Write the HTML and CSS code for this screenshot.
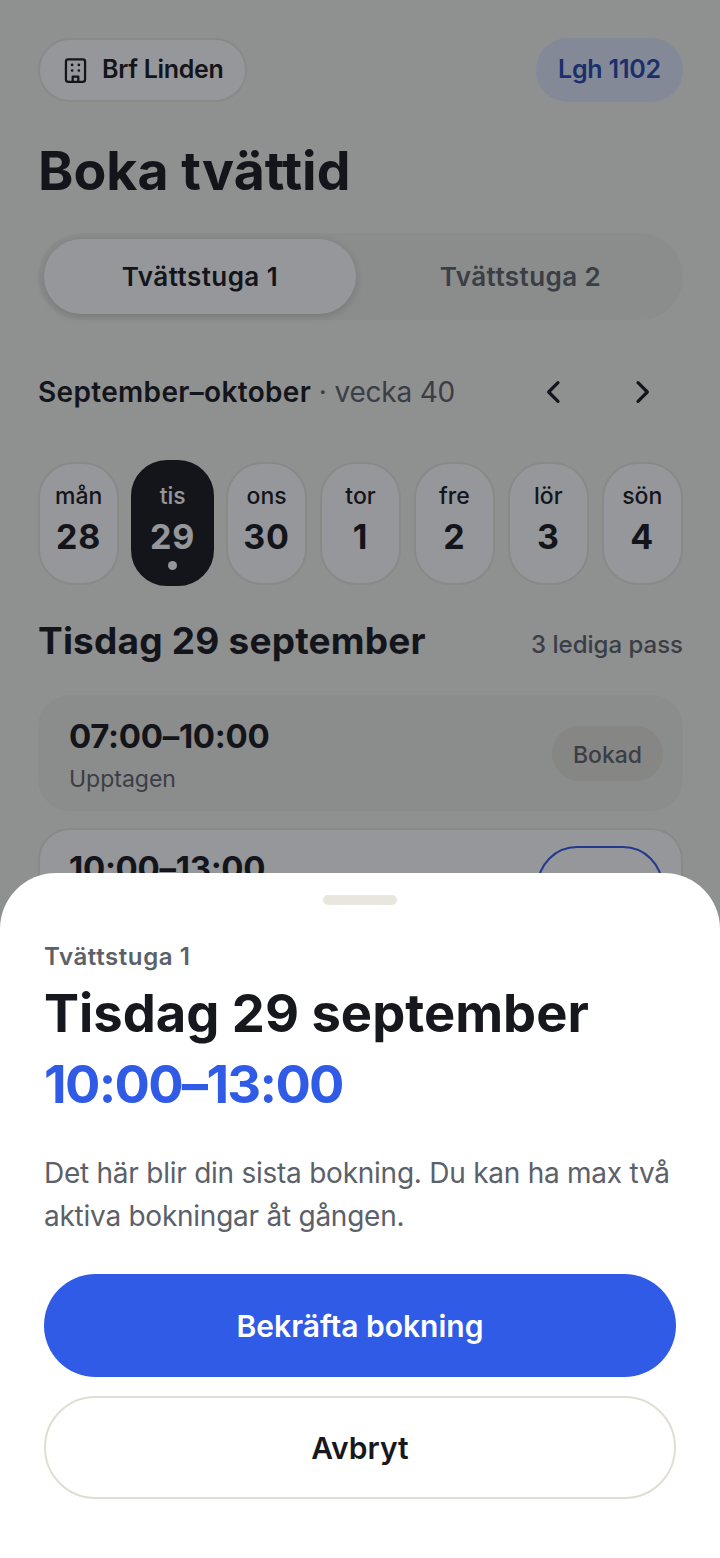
FILE: index.html
```html
<!DOCTYPE html>
<html lang="sv">

<head>
  <meta charset="UTF-8">
  <meta name="viewport" content="width=device-width, initial-scale=1.0">
  <title>Boka tvättid</title>
  <link rel="stylesheet" href="styles.css">
</head>

<body>
  <div class="page">
    <div class="top-row">
      <div class="brf-chip">
        <svg class="brf-icon" viewBox="0 0 24 24" fill="none" stroke="currentColor" stroke-width="2" stroke-linecap="round" stroke-linejoin="round">
          <rect x="3.5" y="2" width="17" height="20" rx="2"></rect>
          <path d="M9.5 22v-4.5h5V22"></path>
          <path d="M9 7h.01M15 7h.01M9 12h.01M15 12h.01" stroke-width="2.4"></path>
        </svg>
        <span>Brf Linden</span>
      </div>
      <div class="apt-chip">Lgh 1102</div>
    </div>

    <h1>Boka tvättid</h1>

    <div class="segment">
      <div class="segment-item active">Tvättstuga 1</div>
      <div class="segment-item">Tvättstuga 2</div>
    </div>

    <div class="week-row">
      <div class="week-label"><b>September–oktober</b> · vecka 40</div>
      <div class="week-nav">
        <svg viewBox="0 0 24 24" fill="none" stroke="currentColor" stroke-width="2.4" stroke-linecap="round" stroke-linejoin="round">
          <path d="M15 5l-7 7 7 7"></path>
        </svg>
        <svg viewBox="0 0 24 24" fill="none" stroke="currentColor" stroke-width="2.4" stroke-linecap="round" stroke-linejoin="round">
          <path d="M9 5l7 7-7 7"></path>
        </svg>
      </div>
    </div>

    <div class="days">
      <div class="day"><span class="day-name">mån</span><span class="day-num">28</span></div>
      <div class="day selected"><span class="day-name">tis</span><span class="day-num">29</span><span class="day-dot"></span></div>
      <div class="day"><span class="day-name">ons</span><span class="day-num">30</span></div>
      <div class="day"><span class="day-name">tor</span><span class="day-num">1</span></div>
      <div class="day"><span class="day-name">fre</span><span class="day-num">2</span></div>
      <div class="day"><span class="day-name">lör</span><span class="day-num">3</span></div>
      <div class="day"><span class="day-name">sön</span><span class="day-num">4</span></div>
    </div>

    <div class="day-head">
      <h2>Tisdag 29 september</h2>
      <span class="free-count">3 lediga pass</span>
    </div>

    <div class="slot taken">
      <div>
        <div class="slot-time">07:00–10:00</div>
        <div class="slot-status">Upptagen</div>
      </div>
      <div class="slot-badge">Bokad</div>
    </div>

    <div class="slot open">
      <div>
        <div class="slot-time">10:00–13:00</div>
        <div class="slot-status">Ledig</div>
      </div>
      <div class="slot-btn">Boka</div>
    </div>
  </div>

  <div class="overlay"></div>

  <div class="sheet">
    <div class="handle"></div>
    <div class="sheet-label">Tvättstuga 1</div>
    <div class="sheet-title">Tisdag 29 september</div>
    <div class="sheet-time">10:00–13:00</div>
    <p class="sheet-text">Det här blir din sista bokning. Du kan ha max två aktiva bokningar åt gången.</p>
    <button class="btn-primary">Bekräfta bokning</button>
    <button class="btn-secondary">Avbryt</button>
  </div>
</body>

</html>
```

FILE: styles.css
```css
* {
  box-sizing: border-box;
}

html,
body {
  margin: 0;
  height: 1558px;
}

body {
  position: relative;
  overflow: hidden;
  font-family: Inter, "Noto Sans", sans-serif;
  background-color: #f3f2ee;
  color: #16181d;
}

.page {
  padding: 38px 37px 0 38px;
}

.top-row {
  display: flex;
  justify-content: space-between;
}

.brf-chip {
  display: flex;
  align-items: center;
  gap: 13px;
  width: 209px;
  height: 64px;
  padding: 0 0 3px 22px;
  background-color: #fff;
  border: 2px solid #e8e6df;
  border-radius: 32px;
  font-size: 25px;
  font-weight: 600;
  letter-spacing: -0.3px;
}

.brf-icon {
  width: 27px;
  height: 27px;
  margin-top: 3px;
}

.apt-chip {
  display: flex;
  align-items: center;
  justify-content: center;
  width: 147px;
  height: 64px;
  padding-bottom: 3px;
  background-color: #dfe6fb;
  border-radius: 32px;
  color: #2346ad;
  font-size: 25px;
  font-weight: 600;
  letter-spacing: -0.2px;
}

h1 {
  margin: 37px 0 28px;
  font-size: 53.6px;
  line-height: 64px;
  font-weight: 700;
}

.segment {
  display: grid;
  grid-template-columns: 312px 1fr;
  gap: 8px;
  height: 87px;
  margin-top: 30px;
  padding: 6px;
  background-color: #ecebe6;
  border-radius: 44px;
}

.segment-item {
  display: flex;
  align-items: center;
  justify-content: center;
  border-radius: 38px;
  font-size: 26px;
  font-weight: 600;
  letter-spacing: 0.45px;
  color: #5c6069;
}

.segment-item.active {
  background-color: #fff;
  color: #16181d;
  box-shadow: 0 2px 8px rgba(0, 0, 0, 0.16);
}

.week-row {
  display: flex;
  justify-content: space-between;
  align-items: center;
  margin-top: 50px;
  height: 44px;
}

.week-label {
  font-size: 28px;
  color: #5c6069;
  letter-spacing: -0.2px;
}

.week-label b {
  font-weight: 600;
  letter-spacing: 0.33px;
  color: #16181d;
}

.week-nav {
  display: flex;
  gap: 56px;
  margin-right: 25px;
  color: #16181d;
}

.week-nav svg {
  width: 32px;
  height: 32px;
}

.days {
  display: grid;
  grid-template-columns: repeat(7, 1fr);
  gap: 12.5px;
  margin-top: 48px;
}

.day {
  display: flex;
  flex-direction: column;
  align-items: center;
  height: 123px;
  padding-top: 17px;
  background-color: #fff;
  border: 2px solid #e8e6df;
  border-radius: 36px;
}

.day.selected {
  margin: -2px -1px;
  height: 126px;
  padding-top: 19px;
  background-color: #16181d;
  border-color: #16181d;
  color: #fff;
}

.day-name {
  font-size: 23px;
  line-height: 30px;
  font-weight: 500;
}

.day-num {
  margin-top: 5px;
  font-size: 34px;
  line-height: 42px;
  font-weight: 700;
  letter-spacing: 1px;
}

.day-dot {
  width: 9px;
  height: 9px;
  margin-top: 3px;
  border-radius: 50%;
  background-color: #fff;
}

.day-head {
  display: flex;
  justify-content: space-between;
  align-items: center;
  margin-top: 30px;
  height: 50px;
}

h2 {
  margin: 0;
  font-size: 37px;
  font-weight: 700;
  letter-spacing: 0.2px;
}

.free-count {
  margin-top: 8px;
  font-size: 24px;
  font-weight: 500;
  color: #5c6069;
}

.slot {
  display: flex;
  justify-content: space-between;
  align-items: center;
  height: 116px;
  margin-top: 30px;
  padding: 0 18px 0 29px;
  border: 2px solid #e8e6df;
  border-radius: 32px;
  background-color: #fff;
}

.slot.taken {
  background-color: #ecebe6;
  border-color: #ecebe6;
}

.slot.open {
  align-items: flex-start;
  margin-top: 17px;
  padding-top: 14px;
}

.slot-time {
  padding-top: 3px;
  font-size: 33px;
  line-height: 42px;
  font-weight: 700;
  letter-spacing: -0.3px;
}

.slot-status {
  margin-top: 7px;
  font-size: 23px;
  line-height: 30px;
  color: #5c6069;
}

.slot-badge {
  display: flex;
  align-items: center;
  justify-content: center;
  width: 111px;
  height: 55px;
  padding-top: 3px;
  border-radius: 28px;
  background-color: #e3e1da;
  font-size: 23px;
  font-weight: 500;
  color: #5c6069;
}

.slot-btn {
  display: flex;
  align-items: center;
  justify-content: center;
  width: 126px;
  height: 84px;
  margin-top: 2px;
  border: 2px solid #2f5be7;
  border-radius: 40px;
  color: #2f5be7;
  font-size: 25px;
  font-weight: 600;
}

.overlay {
  position: absolute;
  inset: 0;
  background-color: rgba(17, 19, 24, 0.44);
}

.sheet {
  position: absolute;
  left: 0;
  right: 0;
  bottom: 0;
  top: 873px;
  padding: 22px 44px 0;
  background-color: #fff;
  border-radius: 56px 56px 0 0;
}

.handle {
  width: 74px;
  height: 10px;
  margin: 0 auto;
  border-radius: 5px;
  background-color: #e9e6dd;
}

.sheet-label {
  margin-top: 36px;
  font-size: 24px;
  line-height: 32px;
  font-weight: 600;
  letter-spacing: 0.6px;
  color: #5c6069;
}

.sheet-title {
  margin-top: 5px;
  font-size: 52.5px;
  line-height: 70px;
  font-weight: 700;
}

.sheet-time {
  margin-top: 1px;
  font-size: 52.5px;
  line-height: 70px;
  font-weight: 700;
  letter-spacing: -1.7px;
  color: #2f5be7;
}

.sheet-text {
  margin: 33px 0 0;
  font-size: 28px;
  line-height: 43px;
  letter-spacing: -0.25px;
  color: #5c6069;
}

.btn-primary,
.btn-secondary {
  display: block;
  width: 632px;
  font-family: inherit;
  font-size: 30px;
  font-weight: 600;
  border-radius: 52px;
}

.btn-primary {
  height: 103px;
  margin-top: 36px;
  background-color: #2f5be7;
  border: none;
  color: #fff;
}

.btn-secondary {
  height: 103px;
  margin-top: 19px;
  background-color: #fff;
  border: 2px solid #e0ddd4;
  color: #16181d;
}
```
